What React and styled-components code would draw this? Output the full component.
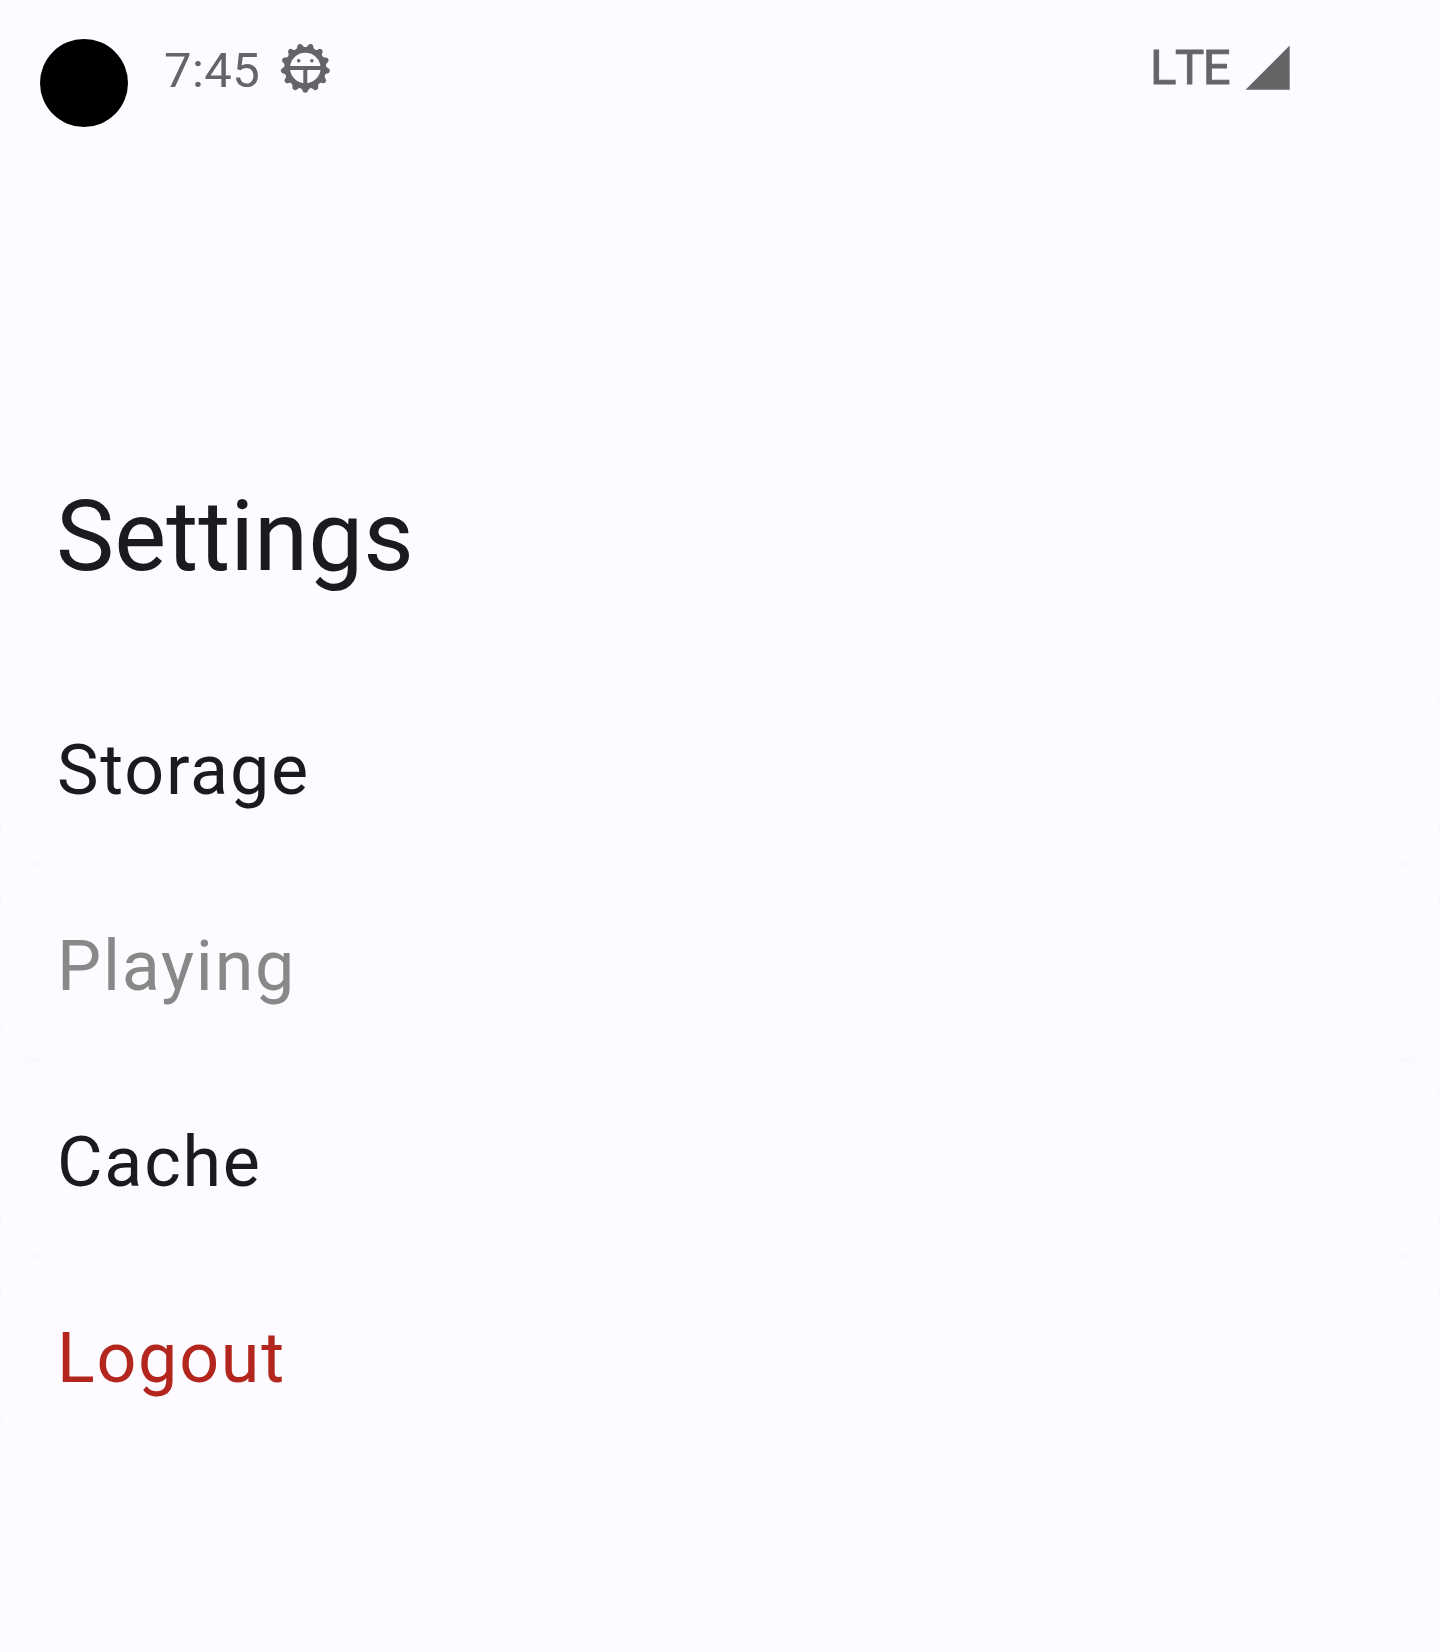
import React from "react";
import styled, { createGlobalStyle } from "styled-components";

const colors = {
  surface: "#fdfbff",
  seam: "#e0e1dd",
  text: "#1b1b1f",
  disabled: "#888888",
  danger: "#b3261e",
  status: "#666467",
};

const GlobalStyle = createGlobalStyle`
  * { box-sizing: border-box; }
  body {
    margin: 0;
    background: ${colors.surface};
    font-family: Roboto, "Liberation Sans", sans-serif;
  }
`;

const Screen = styled.main`
  width: 1440px;
  height: 1652px;
  background: ${colors.surface};
  overflow: hidden;
`;

const StatusBar = styled.header`
  display: flex;
  align-items: flex-start;
  height: 140px;
  padding: 39px 150px 0 40px;
  color: ${colors.status};
`;

const CameraCutout = styled.div`
  width: 88px;
  height: 88px;
  border-radius: 50%;
  background: #000;
`;

const StatusText = styled.span`
  font-size: 49px;
  line-height: 58px;
`;

const Clock = styled(StatusText)`
  margin: 3px 0 0 36px;
  width: 116px;
  letter-spacing: 0.4px;
`;

const BugSvg = styled.svg`
  width: 50px;
  height: 50px;
  margin-top: 4px;
`;

const Network = styled.div`
  display: flex;
  align-items: flex-start;
  margin-left: auto;
`;

const NetworkLabel = styled(StatusText)`
  width: 95px;
  font-kerning: none;
  letter-spacing: -1.4px;
  -webkit-text-stroke: 0.9px ${colors.status};
`;

const SignalSvg = styled.svg`
  width: 45px;
  height: 45px;
  margin-top: 6px;
`;

const TitleBar = styled.div`
  height: 528px;
  padding: 339px 56px 0;
`;

const Title = styled.h1`
  margin: 0;
  font-size: 98px;
  line-height: 116px;
  font-weight: 400;
  color: ${colors.text};
`;

const List = styled.ul`
  margin: 0;
  padding: 0;
  list-style: none;
`;

const Row = styled.li`
  height: 196px;
  border-radius: 42px;
  background: ${colors.seam};
`;

const RowSurface = styled.div`
  display: flex;
  align-items: center;
  height: 100%;
  padding: 8px 57px 0;
  border-radius: 42px;
  background: ${colors.surface};
  color: ${(p) => colors[p.$tone]};
  font-size: 70px;
  line-height: 82px;
  letter-spacing: 1.75px;
`;

const TEETH = 13;

function BugIcon() {
  return (
    <BugSvg viewBox="-25.3 -25 50 50" aria-hidden="true">
      <g stroke={colors.status} fill="none">
        <circle r="18.1" strokeWidth="5.6" />
        <path d="M-17 0H17M0 0V17" strokeWidth="4" />
      </g>
      <g fill={colors.status}>
        {Array.from({ length: TEETH }, (_, i) => (
          <path
            key={i}
            d="M-5 19.9Q-3.1 20.8 -2.8 22.4Q-2.3 24.7 0 24.7Q2.3 24.7 2.8 22.4Q3.1 20.8 5 19.9Z"
            transform={`rotate(${(i * 360) / TEETH})`}
          />
        ))}
        <circle cx="-6.6" cy="-7.3" r="1.8" />
        <circle cx="6.6" cy="-7.3" r="1.8" />
      </g>
    </BugSvg>
  );
}

function SignalIcon() {
  return (
    <SignalSvg viewBox="0 0 45 45" aria-hidden="true">
      <path d="M0.5 44.7L44.7 0.5V44.7Z" fill={colors.status} />
    </SignalSvg>
  );
}

const items = [
  { label: "Storage", tone: "text" },
  { label: "Playing", tone: "disabled" },
  { label: "Cache", tone: "text" },
  { label: "Logout", tone: "danger" },
];

export default function App() {
  return (
    <>
      <GlobalStyle />
      <Screen>
        <StatusBar>
          <CameraCutout />
          <Clock>7:45</Clock>
          <BugIcon />
          <Network>
            <NetworkLabel>LTE</NetworkLabel>
            <SignalIcon />
          </Network>
        </StatusBar>
        <TitleBar>
          <Title>Settings</Title>
        </TitleBar>
        <List>
          {items.map(({ label, tone }) => (
            <Row key={label}>
              <RowSurface $tone={tone}>{label}</RowSurface>
            </Row>
          ))}
        </List>
      </Screen>
    </>
  );
}
